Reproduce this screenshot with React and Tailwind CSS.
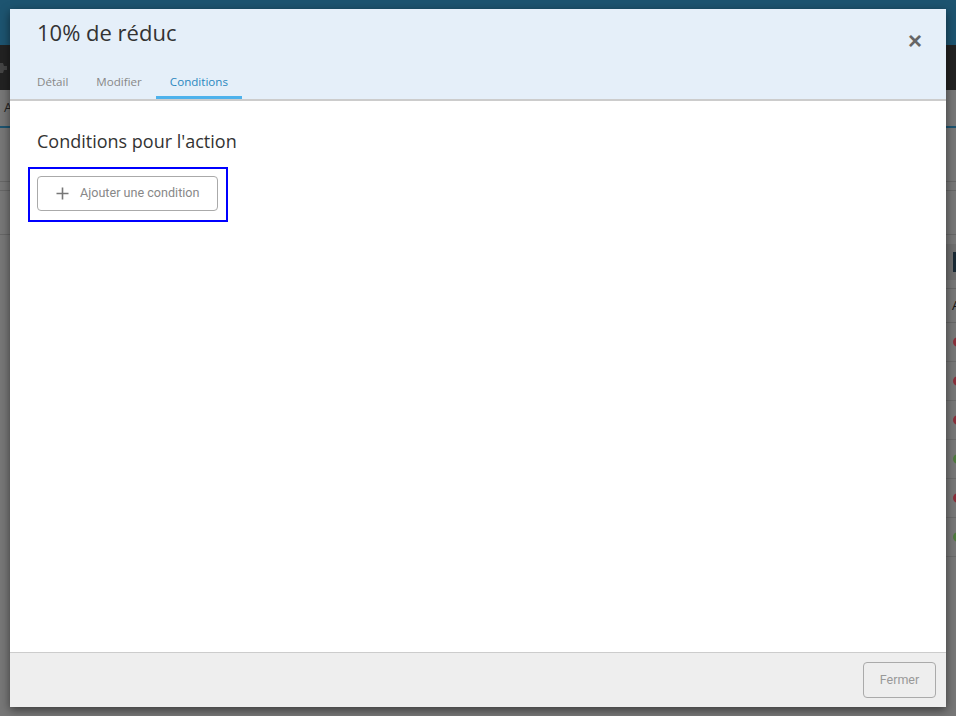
import React from "react";

function BgRow({ dot }) {
  return (
    <div className="h-[39px] border-b border-[#6a6a6a] flex items-center pl-[7px]">
      {dot && <span className={`w-[10px] h-[10px] shrink-0 rounded-full ${dot}`} />}
    </div>
  );
}

export default function App() {
  return (
    <div className="relative w-[956px] h-[716px] overflow-hidden bg-[#777777]" style={{ fontFamily: "'Open Sans', sans-serif" }}>
      {/* underlying page (dimmed) */}
      <div className="h-[45px] bg-[#1d5470]" />
      <div className="h-[45px] bg-[#222222] flex items-center">
        <svg width="8" height="14" viewBox="0 0 8 14">
          <path d="M0 2h3l1 3h3v4H4l-1 3H0z" fill="#444" />
        </svg>
      </div>
      <div className="h-[36px] flex items-center pl-[4px] text-[#222] text-[13px]">A</div>
      <div className="h-[2px] bg-[#1d5470]" />
      <div className="h-[54px] border-b border-[#666]" />
      <div className="h-[9px] border-b border-[#666]" />
      <div className="h-[44px] border-b border-[#666]" />
      <div className="flex justify-end">
        <div className="w-[10px] mt-[9px] overflow-hidden">
          <div className="h-[36px] bg-[#6e6e6e] flex items-center pl-[7px]">
            <span className="w-[4px] h-[20px] shrink-0 bg-[#1a2a35]" />
          </div>
          <div className="h-[9px] border-b border-[#666]" />
          <div className="h-[34px] flex items-center pl-[6px] text-[#111] text-[13px] border-b border-[#666]">A</div>
          <BgRow dot="bg-[#8a2f3a]" />
          <BgRow dot="bg-[#8a2f3a]" />
          <BgRow dot="bg-[#8a2f3a]" />
          <BgRow dot="bg-[#4f7a3e]" />
          <BgRow dot="bg-[#8a2f3a]" />
          <BgRow dot="bg-[#4f7a3e]" />
        </div>
      </div>

      {/* modal */}
      <div className="absolute left-[10px] top-[9px] w-[936px] h-[698px] bg-white flex flex-col shadow-[0_3px_9px_rgba(0,0,0,0.5)]">
        <div className="relative bg-[#e5eff9] border-b-2 border-[#cccccc] h-[92px] flex flex-col">
          <h1 className="pl-[27px] pt-[8px] text-[22px] leading-[30px] text-[#333333] font-normal">10% de réduc</h1>
          <button className="absolute right-[24px] top-[20px] text-[#666] text-[24px] leading-none font-bold" style={{ fontFamily: "'Liberation Sans', sans-serif" }}>×</button>
          <div className="mt-auto flex pl-[13px] text-[11.6px]">
            <div className="px-[14px] h-[35px] flex items-center text-[#888888]">Détail</div>
            <div className="px-[14px] h-[35px] flex items-center text-[#888888]">Modifier</div>
            <div className="px-[14px] h-[35px] flex items-center text-[#2a87bf] border-b-[3px] border-[#4db2ec] pt-[3px]">Conditions</div>
          </div>
        </div>

        <div className="flex-1 pl-[27px] pt-[28px]">
          <h2 className="text-[18px] leading-[24px] text-[#333333] font-normal">Conditions pour l'action</h2>
          <div className="mt-[14px] -ml-[9px] w-[200px] h-[55px] border-2 border-[#0000ff] p-[7px]">
            <button className="w-[181px] h-[35px] border border-[#aaaaaa] rounded-[4px] bg-white flex items-center pl-[18px] gap-[11px] text-[#888888] text-[12.6px]" style={{ fontFamily: "Roboto, sans-serif" }}>
              <svg width="13" height="13" viewBox="0 0 13 13" className="shrink-0">
                <path d="M6.5 0.5v12M0.5 6.5h12" stroke="#777" strokeWidth="1.6" />
              </svg>
              Ajouter une condition
            </button>
          </div>
        </div>

        <div className="h-[55px] border-t border-[#cccccc] bg-[#eeeeee] flex items-center justify-end pr-[10px]">
          <button className="w-[73px] h-[36px] border border-[#aaaaaa] rounded-[4px] text-[#999999] text-[12.5px]" style={{ fontFamily: "Roboto, sans-serif" }}>Fermer</button>
        </div>
      </div>
    </div>
  );
}
